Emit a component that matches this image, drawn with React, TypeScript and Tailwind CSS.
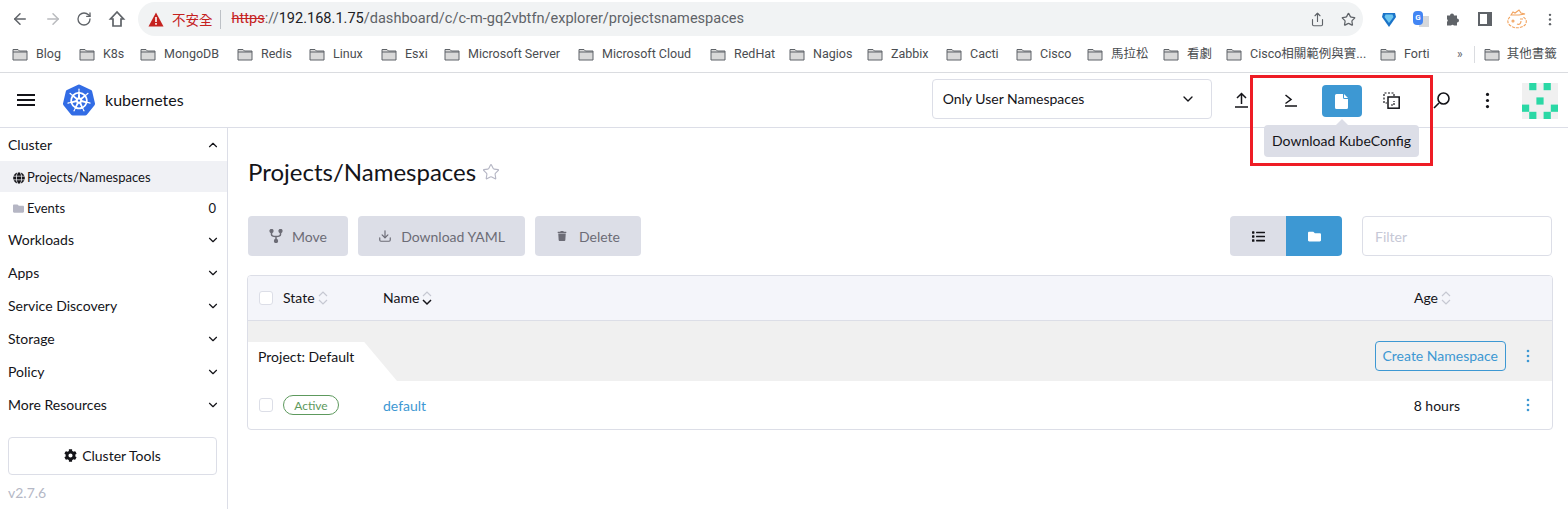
import { ArrowLeft, ArrowRight, ChevronDown, ChevronUp, Download, RotateCw, Share, Star } from 'lucide-react'
import { FaCog, FaFolder, FaGlobe, FaList, FaTrash } from 'react-icons/fa'
import { SiKubernetes } from 'react-icons/si'

const BOOKMARKS = [
  { label: 'Blog', width: 'w-[67px]' },
  { label: 'K8s', width: 'w-[61px]' },
  { label: 'MongoDB', width: 'w-[97px]' },
  { label: 'Redis', width: 'w-[72px]' },
  { label: 'Linux', width: 'w-[72px]' },
  { label: 'Esxi', width: 'w-[63px]' },
  { label: 'Microsoft Server', width: 'w-[134px]' },
  { label: 'Microsoft Cloud', width: 'w-[132px]' },
  { label: 'RedHat', width: 'w-[79px]' },
  { label: 'Nagios', width: 'w-[78px]' },
  { label: 'Zabbix', width: 'w-[79px]' },
  { label: 'Cacti', width: 'w-[70px]' },
  { label: 'Cisco', width: 'w-[71px]' },
  { label: '馬拉松', width: 'w-[76px]' },
  { label: '看劇', width: 'w-[63px]' },
  { label: 'Cisco相關範例與實...', width: 'w-[154px]' },
  { label: 'Forti', width: 'w-[77px]' },
]

const NAV_GROUPS = ['Workloads', 'Apps', 'Service Discovery', 'Storage', 'Policy', 'More Resources']

const AVATAR_CELLS = [
  [1, 0],
  [3, 0],
  [2, 2],
  [0, 3],
  [4, 3],
  [1, 4],
  [3, 4],
]

function BookmarkFolder() {
  return (
    <svg width="16" height="16" viewBox="0 0 16 16" className="shrink-0">
      <path d="M1 3.500h5l1.500 1.500H15v9H1z" fill="#d9d9d9" stroke="#5f6368" strokeWidth="1" />
      <path d="M1 6h14" stroke="#5f6368" strokeWidth="1" />
    </svg>
  )
}

function Bookmark({ label, width }: { label: string; width: string }) {
  return (
    <div className={`flex shrink-0 items-center gap-2 ${width}`}>
      <BookmarkFolder />
      <span className="whitespace-nowrap text-[12.5px] text-[#4a4d51]">{label}</span>
    </div>
  )
}

function SortArrows({ active = false }: { active?: boolean }) {
  return (
    <svg width="12" height="18" viewBox="0 0 12 18" fill="none" className="ml-0.5 shrink-0">
      <path d="M2 7l4-4 4 4" stroke="#c6c8d2" strokeWidth="1.200" />
      <path d="M2 11l4 4 4-4" stroke={active ? '#141419' : '#c6c8d2'} strokeWidth={active ? 1.5 : 1.2} />
    </svg>
  )
}

function Kebab({ className }: { className: string }) {
  return (
    <svg viewBox="0 0 4 14" className={className} fill="currentColor">
      <circle cx="2" cy="2" r="1.300" />
      <circle cx="2" cy="7" r="1.300" />
      <circle cx="2" cy="12" r="1.300" />
    </svg>
  )
}

function ActionButton({ icon, label, width }: { icon: React.ReactNode; label: string; width: string }) {
  return (
    <button type="button" className={`flex h-10 items-center justify-center rounded bg-[#dcdee7] text-[14px] text-[#6c6c76] ${width}`}>
      {icon}
      {label}
    </button>
  )
}

function BrowserBar() {
  return (
    <div className="flex h-[38px] items-center font-['Roboto',sans-serif]">
      <ArrowLeft className="ml-[11px] size-[18px] shrink-0 text-[#5f6368]" strokeWidth={2} />
      <ArrowRight className="ml-[15px] size-[18px] shrink-0 text-[#b9bbbe]" strokeWidth={2} />
      <RotateCw className="ml-[14px] size-[16px] shrink-0 text-[#5f6368]" strokeWidth={2} />
      <svg width="18" height="18" viewBox="0 0 18 18" fill="none" className="ml-[16px] shrink-0 text-[#5f6368]" stroke="currentColor" strokeWidth="1.700">
        <path d="M9 2L2.500 9H5v7h8V9h2.500z" />
      </svg>
      <div className="ml-[12px] flex h-[34px] w-[1225px] shrink-0 items-center rounded-full bg-[#f1f3f4]">
        <svg width="16" height="15" viewBox="0 0 16 15" className="ml-[10px] shrink-0">
          <path d="M8 0.500L15.500 14.500H0.500z" fill="#c5221f" />
          <path d="M7.200 5h1.600v5H7.200zM7.200 11h1.600v1.700H7.200z" fill="#fff" />
        </svg>
        <span className="ml-[8px] font-['Noto_Sans_CJK_TC',sans-serif] text-[13.5px] text-[#c5221f]">不安全</span>
        <span className="ml-[7px] h-[19px] w-px bg-[#bdc1c6]" />
        <span className="ml-[11px] whitespace-nowrap text-[14.55px] text-[#5f6368]">
          <span className="text-[#c5221f] line-through">https</span>
          ://
          <span className="text-[#202124]">192.168.1.75</span>
          /dashboard/c/c-m-gq2vbtfn/explorer/projectsnamespaces
        </span>
        <Share className="ml-auto size-[15px] text-[#5f6368]" strokeWidth={1.8} />
        <Star className="ml-4 mr-[7px] size-[15px] text-[#5f6368]" strokeWidth={2} />
      </div>
      <svg width="14" height="15" viewBox="0 0 14 15" className="ml-[19px] shrink-0">
        <path d="M1 1h12l1 4-7 10L0 5z" fill="#1a73c8" />
        <path d="M3.500 2.500h7l1 2.500L7 11 2.500 5z" fill="#6dc6f0" />
      </svg>
      <div className="relative ml-[17px] h-[16px] w-[16px] shrink-0">
        <div className="absolute bottom-0 right-0 h-[11px] w-[10px] bg-[#d5d7da]" />
        <div className="absolute left-0 top-0 flex h-[14px] w-[10px] items-center justify-center rounded-sm bg-[#4285f4] text-[8px] font-bold leading-none text-white">G</div>
      </div>
      <svg width="14" height="14" viewBox="0 0 14 14" fill="#5f6368" className="ml-[17px] shrink-0">
        <path d="M1 3.500h3a2 2 0 0 1 4 0h3v3a2 2 0 0 1 0 4v3H8a2 2 0 0 0-3 0H1v-3.500a2 2 0 0 0 0-3z" />
      </svg>
      <div className="ml-[18px] flex size-[14px] shrink-0 justify-end border-2 border-[#5f6368]">
        <div className="h-full w-[3px] bg-[#5f6368]" />
      </div>
      <svg width="22" height="20" viewBox="0 0 22 20" fill="none" stroke="#f2a35e" strokeWidth="1.100" className="ml-[14px] shrink-0">
        <path d="M4 8C1 10 1 15 5 17c4 3 11 2 14-1 2-3 2-6-2-8" strokeDasharray="3 1" />
        <path d="M5 6l2-3 2 1 4-3 2 3 4 1-6 1H7z" />
        <circle cx="7" cy="12" r="1" />
        <path d="M11 15c2 1 4 0 4-3M14 10h3" />
      </svg>
      <Kebab className="ml-[20px] h-[13px] w-[4px] shrink-0 text-[#5f6368]" />
    </div>
  )
}

function BookmarkBar() {
  return (
    <div className="flex h-[35px] items-center border-b border-[#dadce0] pb-0.5 pl-3 font-['Roboto','Noto_Sans_CJK_TC',sans-serif]">
      {BOOKMARKS.map((b) => (
        <Bookmark key={b.label} label={b.label} width={b.width} />
      ))}
      <span className="text-[12px] text-[#5f6368]">»</span>
      <span className="ml-[11px] h-[17px] w-px bg-[#dadce0]" />
      <div className="ml-[9px] flex items-center gap-[7px]">
        <BookmarkFolder />
        <span className="whitespace-nowrap text-[12.5px] text-[#4a4d51]">其他書籤</span>
      </div>
    </div>
  )
}

function AppHeader() {
  return (
    <header className="flex h-[55px] items-center border-b border-[#dcdee7] text-[#141419]">
      <svg width="18" height="12" viewBox="0 0 18 12" className="ml-[17px] shrink-0" fill="#141419">
        <path d="M0 0h18v2H0zM0 5h18v2H0zM0 10h18v2H0z" />
      </svg>
      <SiKubernetes className="ml-[28px] size-[32px] shrink-0 text-[#326ce5]" />
      <span className="ml-[10px] text-[16px]">kubernetes</span>
      <div className="mb-0.5 ml-[748px] flex h-10 w-[280px] shrink-0 items-center justify-between rounded border border-[#dcdee7] pb-px pl-[10px] pr-[15px] text-[14px]">
        Only User Namespaces
        <ChevronDown className="size-4" strokeWidth={2} />
      </div>
      <svg width="13" height="16" viewBox="0 0 13 16" fill="none" stroke="#141419" strokeWidth="1.500" className="ml-[23px] shrink-0">
        <path d="M6.500 12V1.500M2 6l4.500-4.500L11 6M0 15h13" />
      </svg>
      <svg width="13" height="13" viewBox="0 0 13 13" fill="none" stroke="#141419" strokeWidth="1.500" className="ml-[36px] shrink-0">
        <path d="M1.500 1l5.500 4.500-5.500 4M1 12h12" />
      </svg>
      <div className="ml-[25px] mt-0.5 flex h-8 w-10 shrink-0 items-center justify-center rounded bg-[#3d98d3]">
        <svg width="13" height="15" viewBox="0 0 13 15" fill="#fff">
          <path d="M1.500 0H8v3.500A1.500 1.500 0 0 0 9.500 5H13v8.500a1.500 1.500 0 0 1-1.500 1.500h-10A1.500 1.500 0 0 1 0 13.500v-12A1.500 1.500 0 0 1 1.500 0zM9 0l4 4H9.500A.5.500 0 0 1 9 3.500z" />
        </svg>
      </div>
      <svg width="17" height="17" viewBox="0 0 17 17" fill="none" stroke="#141419" className="ml-[21px] shrink-0">
        <path d="M11 4V1H1v10h3" strokeWidth="1.200" strokeDasharray="2 1.500" />
        <rect x="5" y="5" width="11.200" height="11.200" strokeWidth="1.500" />
        <path d="M8 13h3V9" strokeWidth="1.200" strokeDasharray="2 1" />
      </svg>
      <svg width="17" height="17" viewBox="0 0 17 17" fill="none" stroke="#141419" strokeWidth="1.600" className="ml-[33px] shrink-0">
        <circle cx="10.500" cy="6.500" r="5.500" />
        <path d="M6 11l-5 5" />
      </svg>
      <Kebab className="ml-[35px] h-[17px] w-[5px] shrink-0 text-[#141419]" />
      <svg width="36" height="36" viewBox="0 0 36 36" className="ml-[32px] mt-0.5 shrink-0">
        <rect width="36" height="36" fill="#f0f0f0" />
        {AVATAR_CELLS.map(([col, row]) => (
          <rect key={`${col}-${row}`} x={col * 7.2} y={row * 7.2} width="7.200" height="7.200" fill="#2ad8a5" />
        ))}
      </svg>
    </header>
  )
}

function Sidebar() {
  return (
    <aside className="flex w-[228px] shrink-0 flex-col border-r border-[#dcdee7] text-[14px] text-[#141419]">
      <div className="flex h-[33px] items-center justify-between pl-2 pr-[7px]">
        Cluster
        <ChevronUp className="size-[14px]" strokeWidth={2} />
      </div>
      <div className="flex h-[31px] items-center gap-[2px] bg-[#f0f1f5] pl-[13px] pt-[2px] text-[13px]">
        <FaGlobe className="size-[12px]" />
        Projects/Namespaces
      </div>
      <div className="flex h-[31px] items-center gap-[3px] pl-[13px] pr-[11px] pt-[2px] text-[13px]">
        <FaFolder className="size-[11px] text-[#b5b6c4]" />
        Events
        <span className="ml-auto">0</span>
      </div>
      {NAV_GROUPS.map((group) => (
        <div key={group} className="flex h-[33px] items-center justify-between pl-2 pr-[7px]">
          {group}
          <ChevronDown className="size-[14px]" strokeWidth={2} />
        </div>
      ))}
      <button type="button" className="ml-2 mt-[16px] flex h-[38px] w-[209px] items-center justify-center gap-[5px] rounded border border-[#dcdee7] pb-[2px]">
        <FaCog className="size-[13px]" />
        Cluster Tools
      </button>
      <span className="ml-2 mt-[7px] text-[#b5b8c6]">v2.7.6</span>
    </aside>
  )
}

function ProjectsTable() {
  return (
    <div className="mt-[19px] overflow-hidden rounded border border-[#dcdee7] text-[14px] text-[#141419]">
      <div className="flex h-[45px] items-center border-b border-[#dcdee7] bg-[#f4f5fa] pb-px">
        <span className="ml-[11px] size-[14px] rounded-[3px] border border-[#dcdee7] bg-white" />
        <span className="ml-[10px] flex w-[100px] items-center">
          State
          <SortArrows />
        </span>
        <span className="flex items-center">
          Name
          <SortArrows active />
        </span>
        <span className="ml-auto mr-[100px] flex items-center">
          Age
          <SortArrows />
        </span>
      </div>
      <div className="relative flex h-[60px] items-center justify-end bg-[#f0f0f0] pr-[22px] pt-[10px]">
        <div className="absolute bottom-0 left-0 flex h-[39px] w-[149px] items-start bg-white pl-[10px] pt-[4px] [clip-path:polygon(0_0,78%_0,100%_100%,0_100%)]">
          Project: Default
        </div>
        <button type="button" className="h-[30px] rounded border border-[#3d98d3] px-[7px] pb-[2px] text-[#3d98d3]">
          Create Namespace
        </button>
        <Kebab className="ml-[20px] h-[14px] w-[4px] text-[#3d98d3]" />
      </div>
      <div className="flex h-[48px] items-center pr-[22px]">
        <span className="ml-[11px] size-[14px] rounded-[3px] border border-[#dcdee7]" />
        <span className="ml-[10px] flex h-5 w-[56px] items-center justify-center rounded-full border border-[#5d995d] pt-[2px] text-[12px] text-[#5d995d]">
          Active
        </span>
        <a className="ml-[44px] text-[#3d98d3]">default</a>
        <span className="ml-auto mr-[66px]">8 hours</span>
        <Kebab className="h-[14px] w-[4px] text-[#3d98d3]" />
      </div>
    </div>
  )
}

export default function App() {
  return (
    <div className="relative h-[509px] w-[1568px] overflow-hidden bg-white">
      <BrowserBar />
      <BookmarkBar />
      <div className="font-['Lato',sans-serif]">
        <AppHeader />
        <div className="flex h-[381px]">
          <Sidebar />
          <main className="min-w-0 flex-1 pl-[19px] pr-[15px]">
            <div className="ml-px mt-[29px] flex h-[30px] items-center gap-[6px]">
              <h1 className="text-[24px] text-[#141419]">Projects/Namespaces</h1>
              <Star className="size-[18px] text-[#b5b6c4]" strokeWidth={1.5} />
            </div>
            <div className="mt-[29px] flex items-center pl-px pr-px">
              <ActionButton
                width="w-[100px] gap-[9px]"
                label="Move"
                icon={
                  <svg width="14" height="14" viewBox="0 0 14 14" fill="none" stroke="#6c6c76" strokeWidth="1.500">
                    <path d="M2.500 3v2.500q0 2 4.500 2t4.500-2V3M7 7.500V11" />
                    <circle cx="2.500" cy="2" r="1.400" fill="#6c6c76" />
                    <circle cx="11.500" cy="2" r="1.400" fill="#6c6c76" />
                    <circle cx="7" cy="12" r="1.400" fill="#6c6c76" />
                  </svg>
                }
              />
              <ActionButton width="ml-[10px] w-[167px] gap-[9px]" label="Download YAML" icon={<Download className="size-[14px]" />} />
              <ActionButton width="ml-[10px] w-[106px] gap-[12px] pl-px" label="Delete" icon={<FaTrash className="size-[10px]" />} />
              <div className="ml-auto flex h-10 overflow-hidden rounded">
                <div className="flex w-14 items-center justify-center bg-[#dcdee7]">
                  <FaList className="size-[13px] text-[#141419]" />
                </div>
                <div className="flex w-14 items-center justify-center bg-[#3d98d3]">
                  <FaFolder className="size-[13px] text-white" />
                </div>
              </div>
              <div className="ml-5 flex h-10 w-[190px] items-center rounded border border-[#dcdee7] pl-[12px] text-[14px] text-[#c6c8d6]">Filter</div>
            </div>
            <ProjectsTable />
          </main>
        </div>
        {/* tooltip and annotation sit over the header */}
        <div className="absolute left-[1264px] top-[125px] flex h-8 w-[155px] items-center justify-center rounded bg-[#dcdee7] pb-[2px] text-[14px] text-[#141419]">
          <span className="absolute -top-[6px] left-[72px] size-0 border-x-[6px] border-b-[6px] border-x-transparent border-b-[#dcdee7]" />
          Download KubeConfig
        </div>
        <div className="absolute left-[1250px] top-[75px] h-[91px] w-[183px] border-[3px] border-[#ee1c25]" />
      </div>
    </div>
  )
}
